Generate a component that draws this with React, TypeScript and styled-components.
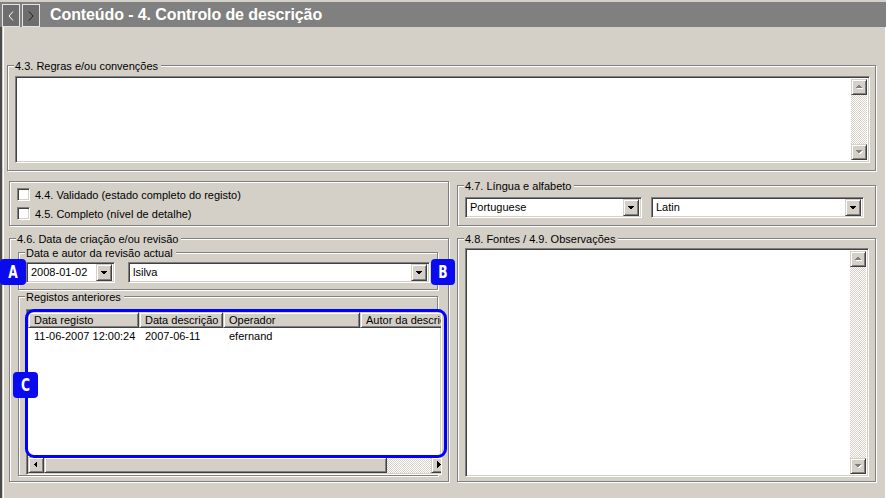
import React from 'react';
import styled, { createGlobalStyle, css } from 'styled-components';

const GlobalStyle = createGlobalStyle`
  html, body {
    margin: 0;
    padding: 0;
    background: #d4d0c8;
  }
  body {
    font-family: "Liberation Sans", Arial, sans-serif;
    font-size: 11px;
    color: #000;
  }
`;

const sunken = css`
  border: 1px solid;
  border-color: #808080 #fff #fff #808080;
  box-shadow: inset 1px 1px 0 #404040, inset -1px -1px 0 #d4d0c8;
`;

const raised = css`
  background: #d4d0c8;
  border: 1px solid;
  border-color: #d4d0c8 #404040 #404040 #d4d0c8;
  box-shadow: inset 1px 1px 0 #fff, inset -1px -1px 0 #808080;
`;

const checker = css`
  background: repeating-conic-gradient(#fff 0 25%, #d4d0c8 0 50%) 0 0 / 2px 2px;
`;

type Dir = 'up' | 'down' | 'left' | 'right';

const arrowPts: Record<Dir, string> = {
  up: '0,5 7,5 3.5,1.5',
  down: '0,2 7,2 3.5,5.5',
  left: '5,0 5,7 1.5,3.5',
  right: '2,0 2,7 5.5,3.5',
};

const Arrow: React.FC<{ dir: Dir; disabled?: boolean }> = ({ dir, disabled }) => (
  <svg width="8" height="8" viewBox="0 0 8 8" shapeRendering="crispEdges">
    {disabled && <polygon points={arrowPts[dir]} fill="#fff" transform="translate(1,1)" />}
    <polygon points={arrowPts[dir]} fill={disabled ? '#808080' : '#000'} />
  </svg>
);

const Window = styled.div`
  position: relative;
  width: 886px;
  height: 498px;
  overflow: hidden;
  background: #d4d0c8;
  display: flex;
  flex-direction: column;
`;

const TitleBar = styled.div`
  height: 25px;
  margin-top: 2px;
  background: #808080;
  display: flex;
  align-items: center;
  padding-left: 2px;
  gap: 2px;
`;

const NavButton = styled.div<{ $dark?: boolean }>`
  width: 16px;
  height: 21px;
  margin-top: 2px;
  border: 1px solid #e4e4e4;
  background: #6e6e6e;
  display: flex;
  align-items: center;
  justify-content: center;
  color: ${(p) => (p.$dark ? '#202020' : '#fff')};
`;

const Title = styled.div`
  margin-left: 8px;
  font-weight: bold;
  font-size: 16px;
  color: #fff;
  letter-spacing: -0.1px;
`;

const Frame = styled.div`
  flex: 1;
  display: flex;
  border-left: 2px solid #4a4a4a;
`;

const Panel = styled.div`
  margin-left: 1px;
  width: 878px;
  height: 458px;
  border-left: 1px solid #fff;
  border-right: 1px solid #fff;
  border-bottom: 1px solid #fff;
  padding: 38px 0 0 3px;
  display: flex;
  flex-direction: column;
`;

const Group = styled.div<{ $w: number; $h: number }>`
  position: relative;
  box-sizing: border-box;
  width: ${(p) => p.$w}px;
  height: ${(p) => p.$h}px;
  border: 1px solid #808080;
  box-shadow: inset 1px 1px 0 #fff, 1px 1px 0 #fff;
`;

const Legend = styled.span`
  position: absolute;
  top: -6px;
  left: 6px;
  padding: 0 3px 0 1px;
  line-height: 13px;
  background: #d4d0c8;
  white-space: nowrap;
`;

const Memo = styled.div<{ $w: number; $h: number }>`
  ${sunken};
  box-sizing: border-box;
  width: ${(p) => p.$w}px;
  height: ${(p) => p.$h}px;
  background: #fff;
  display: flex;
  justify-content: flex-end;
  padding: 2px;
`;

const VScroll = styled.div`
  width: 16px;
  display: flex;
  flex-direction: column;
`;

const ScrollBtn = styled.div`
  ${raised};
  box-sizing: border-box;
  width: 16px;
  height: 16px;
  flex: none;
  display: flex;
  align-items: center;
  justify-content: center;
`;

const Track = styled.div`
  flex: 1;
  ${checker};
`;

const Row = styled.div<{ $top: number }>`
  display: flex;
  align-items: flex-end;
  gap: 8px;
  margin: ${(p) => p.$top}px 0 0 2px;
`;

const Inner = styled.div<{ $pt: number; $pl: number }>`
  padding: ${(p) => p.$pt}px 0 0 ${(p) => p.$pl}px;
`;

const CheckRow = styled.label`
  height: 19px;
  display: flex;
  align-items: center;
  gap: 5px;
`;

const CheckBox = styled.span`
  ${sunken};
  box-sizing: border-box;
  width: 13px;
  height: 13px;
  background: #fff;
`;

const ComboRow = styled.div<{ $gap: number }>`
  display: flex;
  gap: ${(p) => p.$gap}px;
`;

const Combo = styled.div<{ $w: number }>`
  ${sunken};
  box-sizing: border-box;
  width: ${(p) => p.$w}px;
  height: 21px;
  background: #fff;
  display: flex;
  align-items: center;
  padding: 2px;
`;

const ComboText = styled.span`
  flex: 1;
  padding-left: 2px;
  line-height: 15px;
`;

const DropBtn = styled.div`
  ${raised};
  box-sizing: border-box;
  width: 16px;
  height: 17px;
  display: flex;
  align-items: center;
  justify-content: center;
`;

const ListView = styled.div`
  ${sunken};
  box-sizing: border-box;
  width: 416px;
  height: 166px;
  overflow: hidden;
  background: #fff;
  padding: 2px 0 0 1px;
  display: flex;
  flex-direction: column;
`;

const HeaderRow = styled.div`
  display: flex;
  height: 16px;
  width: 430px;
  flex: none;
`;

const HeaderCell = styled.div<{ $w: number }>`
  ${raised};
  box-sizing: border-box;
  width: ${(p) => p.$w}px;
  flex: none;
  padding-left: 5px;
  line-height: 14px;
  white-space: nowrap;
  overflow: hidden;
`;

const DataRow = styled.div`
  display: flex;
  height: 15px;
  margin-top: 1px;
  width: 430px;
`;

const DataCell = styled.div<{ $w: number }>`
  width: ${(p) => p.$w}px;
  flex: none;
  padding-left: 6px;
  box-sizing: border-box;
  line-height: 15px;
  white-space: nowrap;
`;

const ListBody = styled.div`
  flex: 1;
`;

const HScroll = styled.div`
  display: flex;
  height: 16px;
  width: 430px;
  flex: none;
  margin-bottom: 1px;
`;

const Thumb = styled.div`
  ${raised};
  box-sizing: border-box;
  width: 343px;
  height: 16px;
`;

const HTrack = styled.div`
  width: 44px;
  ${checker};
`;

const Badge = styled.div<{ $x: number; $y: number; $w: number }>`
  position: absolute;
  left: ${(p) => p.$x}px;
  top: ${(p) => p.$y}px;
  width: ${(p) => p.$w}px;
  height: 26px;
  border-radius: 4px;
  background: #0a0af0;
  color: #fff;
  font-family: "DejaVu Sans Condensed", "DejaVu Sans", sans-serif;
  font-weight: bold;
  font-size: 17px;
  display: flex;
  align-items: center;
  justify-content: center;
  span {
    display: inline-block;
    transform: scaleX(0.8);
  }
`;

const Highlight = styled.div`
  position: absolute;
  left: 25px;
  top: 309px;
  width: 422px;
  height: 149px;
  box-sizing: border-box;
  border: 3px solid #0000ff;
  border-radius: 9px;
  pointer-events: none;
`;

const Scrollbar: React.FC = () => (
  <VScroll>
    <ScrollBtn>
      <Arrow dir="up" disabled />
    </ScrollBtn>
    <Track />
    <ScrollBtn>
      <Arrow dir="down" disabled />
    </ScrollBtn>
  </VScroll>
);

const columns = [
  { label: 'Data registo', w: 111 },
  { label: 'Data descrição', w: 84 },
  { label: 'Operador', w: 137 },
  { label: 'Autor da descrição', w: 98 },
];

const rows = [['11-06-2007 12:00:24', '2007-06-11', 'efernand', '']];

export default function App() {
  return (
    <>
      <GlobalStyle />
      <Window>
        <TitleBar>
          <NavButton>
            <svg width="6" height="10" viewBox="0 0 6 10">
              <polyline points="5,0.5 1,5 5,9.5" fill="none" stroke="currentColor" strokeWidth="1" />
            </svg>
          </NavButton>
          <NavButton $dark>
            <svg width="6" height="10" viewBox="0 0 6 10">
              <polyline points="1,0.5 5,5 1,9.5" fill="none" stroke="currentColor" strokeWidth="1" />
            </svg>
          </NavButton>
          <Title>Conteúdo - 4. Controlo de descrição</Title>
        </TitleBar>
        <Frame>
          <Panel>
            <Group $w={869} $h={106}>
              <Legend>4.3. Regras e/ou convenções</Legend>
              <Inner $pt={10} $pl={7}>
                <Memo $w={855} $h={87}>
                  <Scrollbar />
                </Memo>
              </Inner>
            </Group>

            <Row $top={10}>
              <Group $w={440} $h={45}>
                <Inner $pt={3} $pl={7}>
                  <CheckRow>
                    <CheckBox />
                    4.4. Validado (estado completo do registo)
                  </CheckRow>
                  <CheckRow>
                    <CheckBox />
                    4.5. Completo (nível de detalhe)
                  </CheckRow>
                </Inner>
              </Group>
              <Group $w={419} $h={41}>
                <Legend>4.7. Língua e alfabeto</Legend>
                <Inner $pt={11} $pl={7}>
                  <ComboRow $gap={9}>
                    <Combo $w={177}>
                      <ComboText>Portuguese</ComboText>
                      <DropBtn>
                        <Arrow dir="down" />
                      </DropBtn>
                    </Combo>
                    <Combo $w={213}>
                      <ComboText>Latin</ComboText>
                      <DropBtn>
                        <Arrow dir="down" />
                      </DropBtn>
                    </Combo>
                  </ComboRow>
                </Inner>
              </Group>
            </Row>

            <Row $top={12}>
              <Group $w={440} $h={244}>
                <Legend>4.6. Data de criação e/ou revisão</Legend>
                <Inner $pt={13} $pl={8}>
                  <Group $w={420} $h={38}>
                    <Legend>Data e autor da revisão actual</Legend>
                    <Inner $pt={9} $pl={7}>
                      <ComboRow $gap={13}>
                        <Combo $w={89}>
                          <ComboText>2008-01-02</ComboText>
                          <DropBtn>
                            <Arrow dir="down" />
                          </DropBtn>
                        </Combo>
                        <Combo $w={302}>
                          <ComboText>lsilva</ComboText>
                          <DropBtn>
                            <Arrow dir="down" />
                          </DropBtn>
                        </Combo>
                      </ComboRow>
                    </Inner>
                  </Group>
                  <div style={{ height: 6 }} />
                  <Group $w={420} $h={180}>
                    <Legend>Registos anteriores</Legend>
                    <Inner $pt={12} $pl={7}>
                      <ListView>
                        <HeaderRow>
                          {columns.map((c) => (
                            <HeaderCell key={c.label} $w={c.w}>
                              {c.label}
                            </HeaderCell>
                          ))}
                        </HeaderRow>
                        <ListBody>
                          {rows.map((r, i) => (
                            <DataRow key={i}>
                              {r.map((v, j) => (
                                <DataCell key={j} $w={columns[j].w}>
                                  {v}
                                </DataCell>
                              ))}
                            </DataRow>
                          ))}
                        </ListBody>
                        <HScroll>
                          <ScrollBtn>
                            <Arrow dir="left" />
                          </ScrollBtn>
                          <Thumb />
                          <HTrack />
                          <ScrollBtn>
                            <Arrow dir="right" />
                          </ScrollBtn>
                        </HScroll>
                      </ListView>
                    </Inner>
                  </Group>
                </Inner>
              </Group>
              <Group $w={419} $h={244}>
                <Legend>4.8. Fontes / 4.9. Observações</Legend>
                <Inner $pt={9} $pl={7}>
                  <Memo $w={404} $h={229}>
                    <Scrollbar />
                  </Memo>
                </Inner>
              </Group>
            </Row>
          </Panel>
        </Frame>

        <Highlight />
        <Badge $x={0} $y={259} $w={26}>
          <span>A</span>
        </Badge>
        <Badge $x={431} $y={259} $w={24}>
          <span>B</span>
        </Badge>
        <Badge $x={13} $y={372} $w={25}>
          <span>C</span>
        </Badge>
      </Window>
    </>
  );
}
